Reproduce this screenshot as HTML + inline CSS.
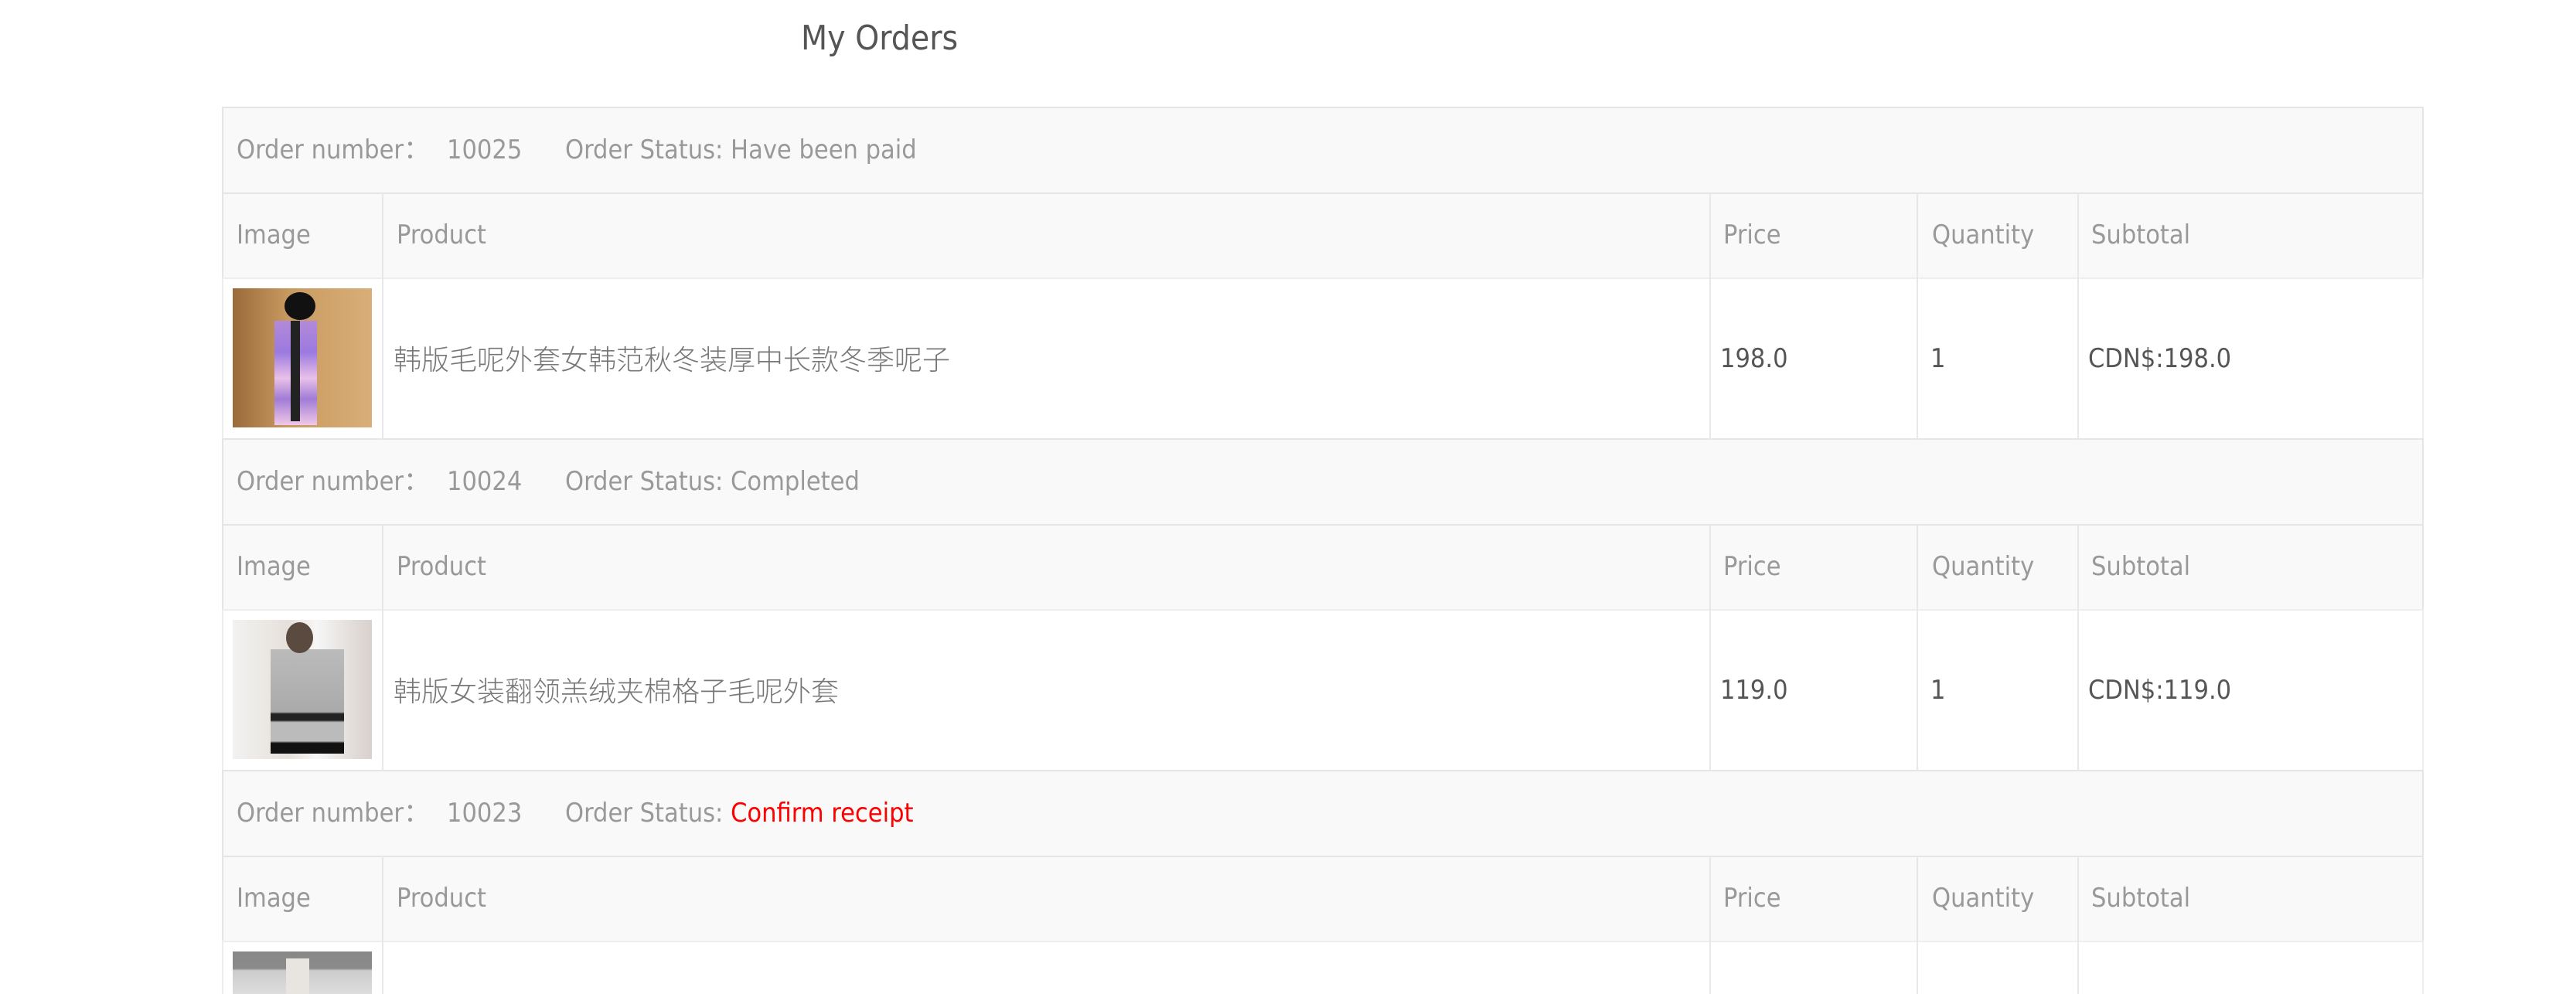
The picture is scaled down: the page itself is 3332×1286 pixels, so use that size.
<!DOCTYPE html>
<html style="overflow:hidden;height:1286px"><head><meta charset="utf-8"><style>
*{margin:0;padding:0;box-sizing:border-box}
body{width:3332px;height:1286px;background:#fff;position:relative;overflow:hidden;font-family:"DejaVu Sans Condensed","Liberation Sans","Noto Sans CJK SC",sans-serif}
.a{position:absolute}
.r{position:absolute;left:287px;width:2848px;border:2px solid #e5e5e5}
.g{background:#f9f9f9}
.v{position:absolute;width:2px;background:#e8e8e8}
.t{position:absolute;font-size:34px;color:#999;white-space:nowrap;line-height:40px}
.d{position:absolute;font-size:34px;color:#555;white-space:nowrap;line-height:40px}
.c{position:absolute;font-size:36px;color:#777;white-space:nowrap;line-height:44px;font-family:"Noto Sans CJK SC",sans-serif;font-weight:300}
</style></head><body>
<div class="a" style="left:1036px;top:26px;font-size:44px;color:#555;line-height:48px">My Orders</div>

<div class="r g" style="top:138px;height:113px"></div>
<div class="r g" style="top:249px;height:112px"></div>
<div class="r" style="top:359px;height:210px;border-color:#eee"></div>
<div class="r g" style="top:567px;height:113px"></div>
<div class="r g" style="top:678px;height:112px"></div>
<div class="r" style="top:788px;height:210px;border-color:#eee"></div>
<div class="r g" style="top:996px;height:113px"></div>
<div class="r g" style="top:1107px;height:112px"></div>
<div class="r" style="top:1217px;height:69px;border-color:#eee;border-bottom:none"></div>

<div class="v" style="left:494px;top:249px;height:320px"></div>
<div class="v" style="left:2211px;top:249px;height:320px"></div>
<div class="v" style="left:2479px;top:249px;height:320px"></div>
<div class="v" style="left:2687px;top:249px;height:320px"></div>
<div class="v" style="left:494px;top:678px;height:320px"></div>
<div class="v" style="left:2211px;top:678px;height:320px"></div>
<div class="v" style="left:2479px;top:678px;height:320px"></div>
<div class="v" style="left:2687px;top:678px;height:320px"></div>
<div class="v" style="left:494px;top:1107px;height:179px"></div>
<div class="v" style="left:2211px;top:1107px;height:179px"></div>
<div class="v" style="left:2479px;top:1107px;height:179px"></div>
<div class="v" style="left:2687px;top:1107px;height:179px"></div>

<div class="t" style="left:306px;top:174px">Order number：</div>
<div class="t" style="left:578px;top:174px">10025</div>
<div class="t" style="left:731px;top:174px">Order Status: Have been paid</div>
<div class="t" style="left:306px;top:284px">Image</div>
<div class="t" style="left:513px;top:284px">Product</div>
<div class="t" style="left:2229px;top:284px">Price</div>
<div class="t" style="left:2499px;top:284px">Quantity</div>
<div class="t" style="left:2705px;top:284px">Subtotal</div>
<div class="a" style="left:301px;top:373px;width:180px;height:180px;background:linear-gradient(90deg,#9a6a3a,#c89a60 40%,#d9ae78)"></div>
<div class="a" style="left:368px;top:378px;width:40px;height:36px;border-radius:50%;background:#111"></div>
<div class="a" style="left:355px;top:415px;width:55px;height:135px;background:linear-gradient(180deg,#b38ad8,#9b7ae0 30%,#e9c0e8 55%,#a17cd6 75%,#f0c8e8)"></div>
<div class="a" style="left:376px;top:415px;width:12px;height:130px;background:#222"></div>
<div class="c" style="left:509px;top:441px">韩版毛呢外套女韩范秋冬装厚中长款冬季呢子</div>
<div class="d" style="left:2225px;top:444px">198.0</div>
<div class="d" style="left:2497px;top:444px">1</div>
<div class="d" style="left:2701px;top:444px">CDN$:198.0</div>

<div class="t" style="left:306px;top:603px">Order number：</div>
<div class="t" style="left:578px;top:603px">10024</div>
<div class="t" style="left:731px;top:603px">Order Status: Completed</div>
<div class="t" style="left:306px;top:713px">Image</div>
<div class="t" style="left:513px;top:713px">Product</div>
<div class="t" style="left:2229px;top:713px">Price</div>
<div class="t" style="left:2499px;top:713px">Quantity</div>
<div class="t" style="left:2705px;top:713px">Subtotal</div>
<div class="a" style="left:301px;top:802px;width:180px;height:180px;background:linear-gradient(90deg,#f2f2f2,#e6e0da 40%,#f6f6f6 60%,#d8d0cc)"></div>
<div class="a" style="left:350px;top:840px;width:95px;height:135px;background:linear-gradient(180deg,#bbb,#aaa 60%,#222 62%,#222 68%,#bbb 70%,#bbb 88%,#111 90%)"></div>
<div class="a" style="left:370px;top:805px;width:35px;height:40px;border-radius:50%;background:#5a4a40"></div>
<div class="c" style="left:509px;top:870px">韩版女装翻领羔绒夹棉格子毛呢外套</div>
<div class="d" style="left:2225px;top:873px">119.0</div>
<div class="d" style="left:2497px;top:873px">1</div>
<div class="d" style="left:2701px;top:873px">CDN$:119.0</div>

<div class="t" style="left:306px;top:1032px">Order number：</div>
<div class="t" style="left:578px;top:1032px">10023</div>
<div class="t" style="left:731px;top:1032px">Order Status: <span style="color:#f00">Confirm receipt</span></div>
<div class="t" style="left:306px;top:1142px">Image</div>
<div class="t" style="left:513px;top:1142px">Product</div>
<div class="t" style="left:2229px;top:1142px">Price</div>
<div class="t" style="left:2499px;top:1142px">Quantity</div>
<div class="t" style="left:2705px;top:1142px">Subtotal</div>
<div class="a" style="left:301px;top:1231px;width:180px;height:55px;background:linear-gradient(180deg,#888 0,#8a8a8a 40%,#ccc 45%,#ddd)"></div>
<div class="a" style="left:370px;top:1240px;width:30px;height:46px;background:#e8e4e0"></div>
</body></html>
